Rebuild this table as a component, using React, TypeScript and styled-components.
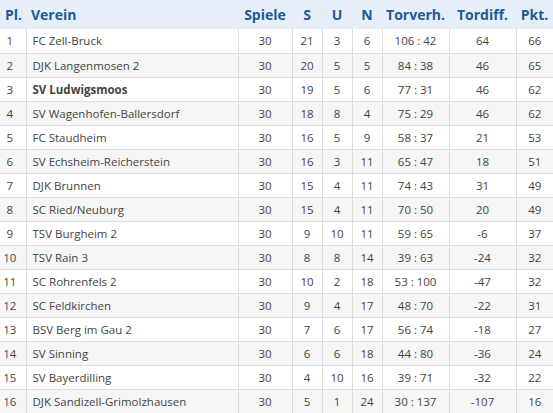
import React from "react";
import styled, { createGlobalStyle } from "styled-components";

const Global = createGlobalStyle`
  html, body { margin: 0; padding: 0; background: #fff; }
  body { font-family: "Open Sans", "Liberation Sans", sans-serif; }
`;

const Table = styled.table`
  width: 553px;
  border-collapse: collapse;
  table-layout: fixed;
  font-family: "Open Sans", "Liberation Sans", sans-serif;
`;

const HeadRow = styled.tr`
  background: #e6eff9;
  height: 29px;
`;

const Th = styled.th<{ $align?: string }>`
  color: #1c5b96;
  font-weight: 700;
  font-size: 14px;
  text-align: ${(p) => p.$align || "center"};
  padding: 0;
  padding-left: ${(p) => (p.$align === "left" ? "5px" : "0")};
  white-space: nowrap;
  border: none;
`;

const Row = styled.tr<{ $even: boolean }>`
  background: ${(p) => (p.$even ? "#f6f6f6" : "#ffffff")};
  height: 24px;
`;

const Td = styled.td<{ $align?: string; $bold?: boolean }>`
  color: #444;
  font-size: 11.5px;
  text-align: ${(p) => p.$align || "center"};
  padding: 0 0 0 ${(p) => (p.$align === "left" ? "6px" : "0")};
  font-weight: ${(p) => (p.$bold ? 700 : 400)};
  border: 1px solid #dcdcdc;
  border-top: none;
  white-space: nowrap;
  &:first-child { border-left: none; padding-right: 6px; }
  &:last-child { border-right: none; }
`;

const cols = [26, 212, 54, 30, 30, 30, 67, 67, 37];

const data: [number, string, number, number, number, number, string, number, number][] = [
  [1, "FC Zell-Bruck", 30, 21, 3, 6, "106 : 42", 64, 66],
  [2, "DJK Langenmosen 2", 30, 20, 5, 5, "84 : 38", 46, 65],
  [3, "SV Ludwigsmoos", 30, 19, 5, 6, "77 : 31", 46, 62],
  [4, "SV Wagenhofen-Ballersdorf", 30, 18, 8, 4, "75 : 29", 46, 62],
  [5, "FC Staudheim", 30, 16, 5, 9, "58 : 37", 21, 53],
  [6, "SV Echsheim-Reicherstein", 30, 16, 3, 11, "65 : 47", 18, 51],
  [7, "DJK Brunnen", 30, 15, 4, 11, "74 : 43", 31, 49],
  [8, "SC Ried/Neuburg", 30, 15, 4, 11, "70 : 50", 20, 49],
  [9, "TSV Burgheim 2", 30, 9, 10, 11, "59 : 65", -6, 37],
  [10, "TSV Rain 3", 30, 8, 8, 14, "39 : 63", -24, 32],
  [11, "SC Rohrenfels 2", 30, 10, 2, 18, "53 : 100", -47, 32],
  [12, "SC Feldkirchen", 30, 9, 4, 17, "48 : 70", -22, 31],
  [13, "BSV Berg im Gau 2", 30, 7, 6, 17, "56 : 74", -18, 27],
  [14, "SV Sinning", 30, 6, 6, 18, "44 : 80", -36, 24],
  [15, "SV Bayerdilling", 30, 4, 10, 16, "39 : 71", -32, 22],
  [16, "DJK Sandizell-Grimolzhausen", 30, 5, 1, 24, "30 : 137", -107, 16],
];

export default function App() {
  return (
    <>
      <Global />
      <Table>
        <colgroup>
          {cols.map((w, i) => (
            <col key={i} style={{ width: w }} />
          ))}
        </colgroup>
        <thead>
          <HeadRow>
            <Th $align="left">Pl.</Th>
            <Th $align="left">Verein</Th>
            <Th>Spiele</Th>
            <Th>S</Th>
            <Th>U</Th>
            <Th>N</Th>
            <Th>Torverh.</Th>
            <Th>Tordiff.</Th>
            <Th>Pkt.</Th>
          </HeadRow>
        </thead>
        <tbody>
          {data.map((r, i) => (
            <Row key={r[0]} $even={i % 2 === 1}>
              <Td>{r[0]}</Td>
              <Td $align="left" $bold={r[0] === 3}>{r[1]}</Td>
              <Td>{r[2]}</Td>
              <Td>{r[3]}</Td>
              <Td>{r[4]}</Td>
              <Td>{r[5]}</Td>
              <Td>{r[6]}</Td>
              <Td>{r[7]}</Td>
              <Td>{r[8]}</Td>
            </Row>
          ))}
        </tbody>
      </Table>
    </>
  );
}
